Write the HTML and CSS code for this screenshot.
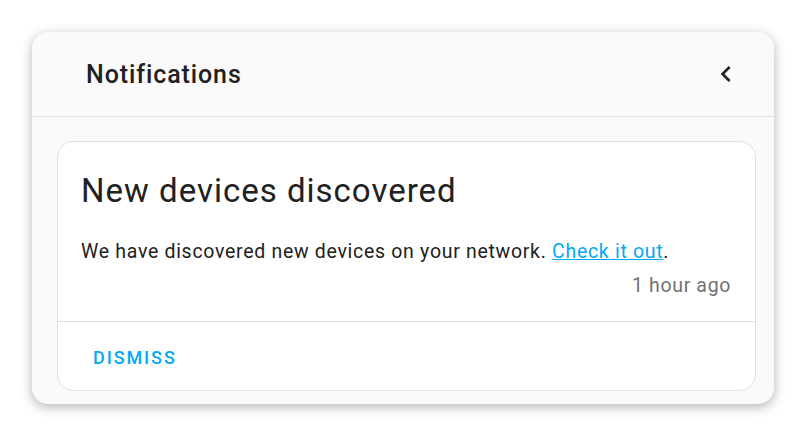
FILE: index.html
```html
<!DOCTYPE html>
<html>

<head>
    <title>Notifications</title>
    <link rel="stylesheet" href="styles.css">
</head>

<body>
    <div class="drawer">
        <div class="drawer-header">
            <span class="drawer-title">Notifications</span>
            <button class="close-btn" aria-label="Close">
                <svg viewBox="0 0 24 24" width="32" height="32">
                    <path d="M15.41,16.58L10.83,12L15.41,7.41L14,6L8,12L14,18L15.41,16.58Z" />
                </svg>
            </button>
        </div>
        <div class="drawer-content">
            <div class="card">
                <div class="card-body">
                    <h1 class="card-title">New devices discovered</h1>
                    <p class="message">We have discovered new devices on your network. <a href="#">Check it out</a>.</p>
                    <div class="time">1 hour ago</div>
                </div>
                <div class="card-actions">
                    <button class="dismiss">Dismiss</button>
                </div>
            </div>
        </div>
    </div>
</body>

</html>
```

FILE: styles.css
```css
body {
    margin: 0;
    padding: 32px;
    background: #fff;
    font-family: Roboto, "Noto Sans", sans-serif;
}

.drawer {
    width: 742px;
    height: 372px;
    background: #fafafa;
    border-radius: 16px;
    box-shadow: 0 3px 12px rgba(0, 0, 0, 0.3);
    overflow: hidden;
}

.drawer-header {
    height: 84px;
    display: flex;
    align-items: center;
    justify-content: space-between;
    padding: 0 32px 0 54px;
    border-bottom: 1px solid #e0e0e0;
}

.drawer-title {
    font-size: 25px;
    font-weight: 500;
    letter-spacing: 0.9px;
    color: #212121;
}

.close-btn {
    background: none;
    border: none;
    padding: 0;
    width: 32px;
    height: 32px;
    cursor: pointer;
}

.close-btn svg {
    display: block;
    fill: #212121;
}

.drawer-content {
    padding: 24px 18px 0 25px;
}

.card {
    background: #fff;
    border: 1px solid #e0e0e0;
    border-radius: 16px;
    height: 250px;
    box-sizing: border-box;
    display: flex;
    flex-direction: column;
}

.card-body {
    padding: 29px 24px 0 23px;
    height: 180px;
    box-sizing: border-box;
    border-bottom: 1px solid #e0e0e0;
}

.card-title {
    margin: 0;
    font-size: 33px;
    font-weight: 400;
    letter-spacing: 1px;
    color: #212121;
    line-height: 40px;
}

.message {
    margin: 27px 0 0;
    font-size: 19.5px;
    letter-spacing: 0.7px;
    line-height: 28px;
    color: #212121;
}

.message a {
    color: #03a9f4;
}

.time {
    text-align: right;
    font-size: 19.5px;
    letter-spacing: 0.65px;
    line-height: 28px;
    color: #727272;
    margin-top: 6px;
}

.card-actions {
    padding: 3px 23px 0;
    flex: 1;
    display: flex;
    align-items: center;
}

.dismiss {
    background: none;
    border: none;
    font-family: inherit;
    font-size: 18px;
    font-weight: 500;
    letter-spacing: 1.9px;
    text-transform: uppercase;
    color: #03a9f4;
    padding: 8px 12px;
    cursor: pointer;
}
```
